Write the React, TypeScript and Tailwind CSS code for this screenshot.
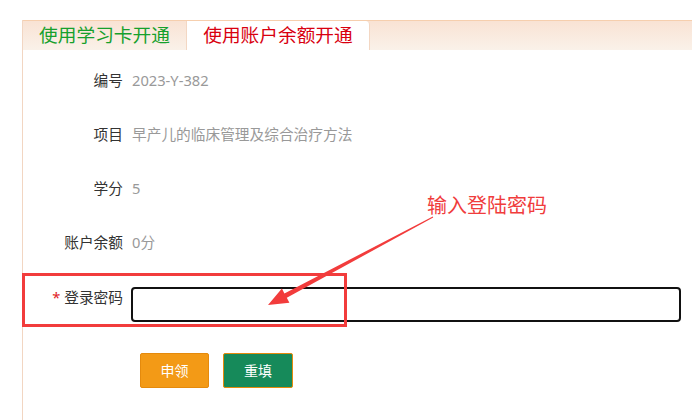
import React from "react";

const font = { fontFamily: '"Noto Sans", "Noto Sans CJK SC", sans-serif' };

function InfoRow({ label, value }: { label: string; value: string }) {
  return (
    <div className="flex h-[54px] items-center text-[14.7px]">
      <div className="w-[100px] text-right text-[#333]">{label}</div>
      <div className="ml-[9px] text-[#999]">{value}</div>
    </div>
  );
}

export default function App() {
  return (
    <div className="relative h-[420px] w-[692px] overflow-hidden bg-white" style={font}>
      <div className="ml-[22px] mt-[20px] flex h-[400px] flex-col border-l border-[#f2d6c2]">
        <div className="flex h-[30px] border-t border-[#f6cfae] bg-gradient-to-b from-[#f9e3d4] to-[#faf1e9]">
          <div className="flex w-[164px] items-center justify-center rounded-tl-[4px] border-r border-[#f3d7c3] text-[18.7px] text-[#16a02c]">
            使用学习卡开通
          </div>
          <div className="flex w-[183px] items-center justify-center rounded-tr-[4px] border-r border-[#f3d7c3] bg-white text-[18.7px] text-[#d8000f]">
            使用账户余额开通
          </div>
        </div>
        <div className="pt-[3px]">
          <InfoRow label="编号" value="2023-Y-382" />
          <InfoRow label="项目" value="早产儿的临床管理及综合治疗方法" />
          <InfoRow label="学分" value="5" />
          <InfoRow label="账户余额" value="0分" />
          <div className="mt-[18px] flex items-start text-[14.7px]">
            <div className="w-[100px] text-right leading-[20px] text-[#333]">
              <span className="mr-[4px] text-[#e0201f]">*</span>登录密码
            </div>
            <div className="ml-[8px] h-[35px] w-[550px] rounded-[4px] border-2 border-[#111]"></div>
          </div>
          <div className="ml-[117px] mt-[31px] flex gap-[14px]">
            <button className="h-[35px] w-[69px] rounded-[2px] border border-[#e58a0c] bg-[#f39a16] text-[14px] text-white">
              申领
            </button>
            <button className="h-[35px] w-[70px] rounded-[2px] border border-[#e58a0c] bg-[#168a5a] text-[14px] text-white">
              重填
            </button>
          </div>
        </div>
      </div>

      <div className="pointer-events-none absolute left-[22px] top-[273px] h-[54px] w-[325px] border-[3px] border-[#f23c3c]"></div>
      <div className="pointer-events-none absolute left-[427px] top-[192px] text-[20px] leading-[28px] text-[#f03c3c]">
        输入登陆密码
      </div>
      <svg className="pointer-events-none absolute left-0 top-0" width="692" height="420" viewBox="0 0 692 420">
        <polygon
          points="432.8,216.6 284.4,293.4 281.9,288.5 268,305 289.4,302.7 286.8,297.8 433.2,217.4"
          fill="#f23c3c"
        />
      </svg>
    </div>
  );
}
